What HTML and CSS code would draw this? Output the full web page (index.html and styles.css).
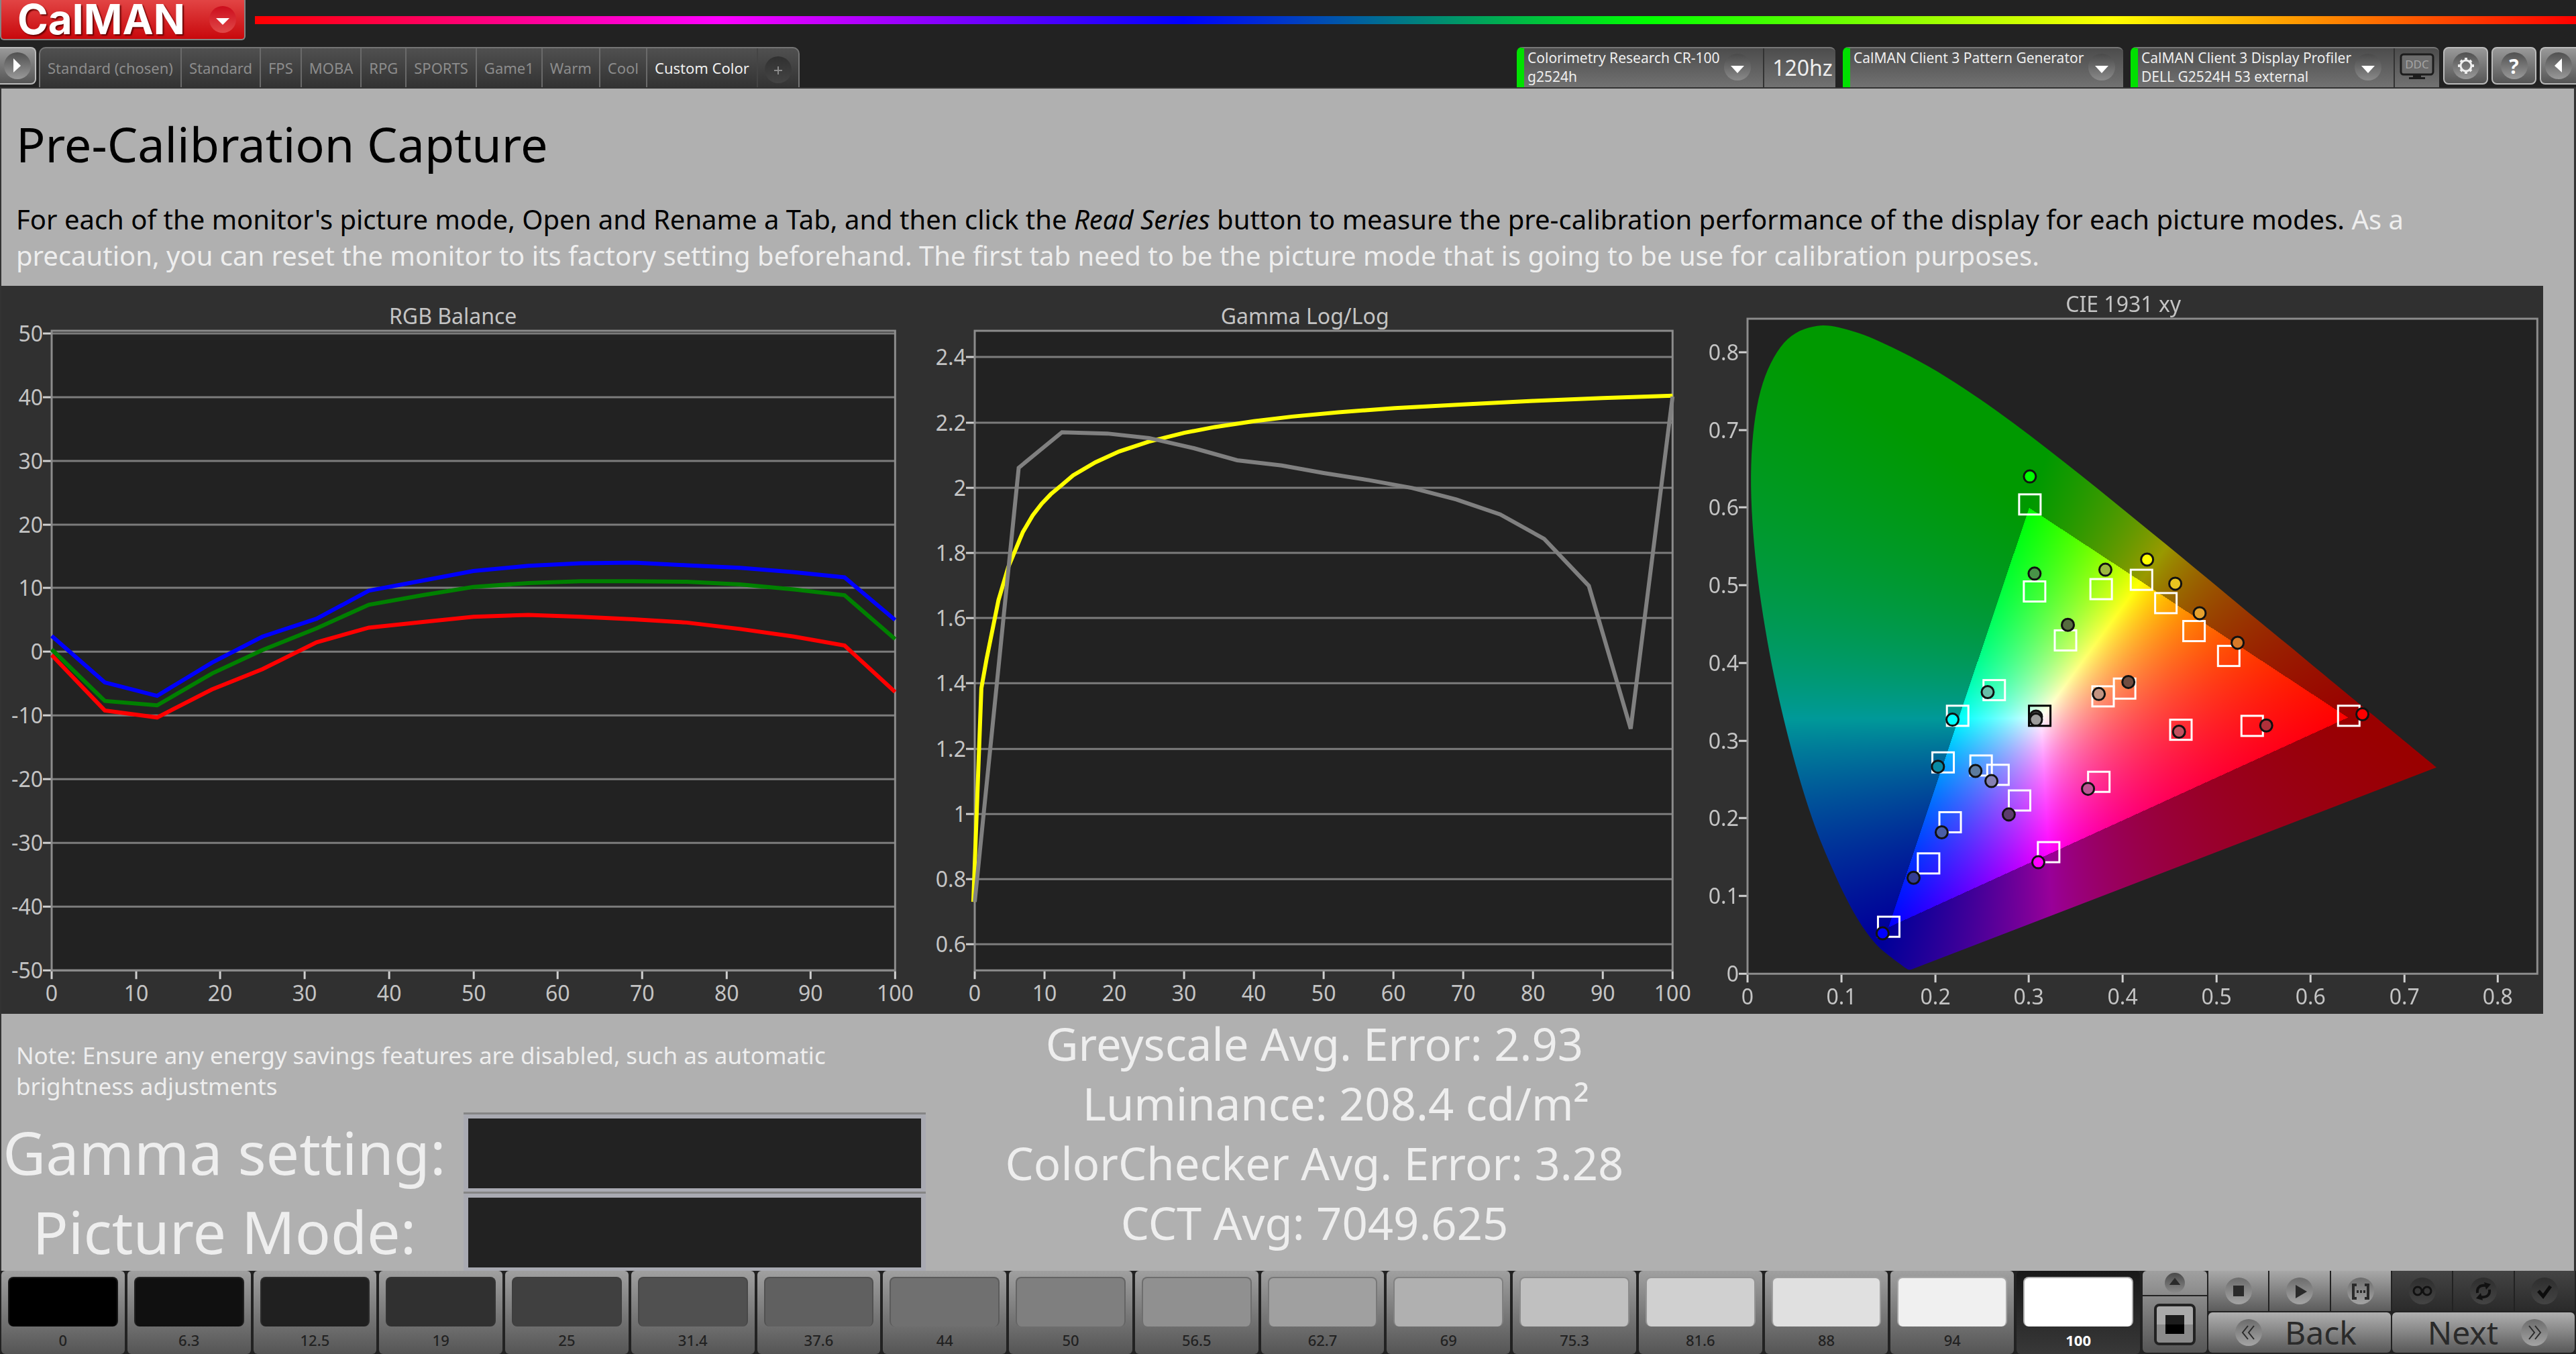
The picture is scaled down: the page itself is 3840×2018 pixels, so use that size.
FILE: index.html
```html
<!DOCTYPE html>
<html lang="en">
<head>
  <meta charset="UTF-8" />
  <meta name="viewport" content="width=device-width, initial-scale=1.0" />
  <title>CalMAN - Pre-Calibration Capture</title>
  <link rel="stylesheet" href="styles.css">
</head>
<body>
  <header class="topbar">
    <button class="logo" type="button">
      CalMAN
      <span class="knob knob-red"><svg viewBox="0 0 40 40"><path d="M10 18h20l-10 10z" fill="#fff"/></svg></span>
    </button>
    <div class="rainbow"></div>
  </header>

  <div class="toolbar">
    <button class="tool tool-left" type="button" aria-label="Show workflow">
      <span class="knob"><svg viewBox="0 0 40 40"><path d="M14 9v21l11-10z" fill="#fff"/></svg></span>
    </button>
    <nav class="tabs">
      <button class="tab" type="button">Standard (chosen)</button>
      <button class="tab" type="button">Standard</button>
      <button class="tab" type="button">FPS</button>
      <button class="tab" type="button">MOBA</button>
      <button class="tab" type="button">RPG</button>
      <button class="tab" type="button">SPORTS</button>
      <button class="tab" type="button">Game1</button>
      <button class="tab" type="button">Warm</button>
      <button class="tab" type="button">Cool</button>
      <button class="tab active" type="button">Custom Color</button>
      <button class="tab tab-add" type="button" aria-label="Add tab">
        <span class="knob knob-dark"><svg viewBox="0 0 40 40"><path d="M14 21h12M20 15v12" stroke="#8a8a8a" stroke-width="2"/></svg></span>
      </button>
    </nav>

    <div class="devices">
      <div class="device device-meter">
        <button class="device-main" type="button">
          <span class="device-name">Colorimetry Research CR-100<br>g2524h</span>
          <span class="knob"><svg viewBox="0 0 40 40"><path d="M10 18h20l-10 11z" fill="#fff"/></svg></span>
        </button>
        <span class="device-rate">120hz</span>
      </div>
      <div class="device device-source">
        <button class="device-main" type="button">
          <span class="device-name">CalMAN Client 3 Pattern Generator</span>
          <span class="knob"><svg viewBox="0 0 40 40"><path d="M10 18h20l-10 11z" fill="#fff"/></svg></span>
        </button>
      </div>
      <div class="device device-display">
        <button class="device-main" type="button">
          <span class="device-name">CalMAN Client 3 Display Profiler<br>DELL G2524H 53 external</span>
          <span class="knob"><svg viewBox="0 0 40 40"><path d="M10 18h20l-10 11z" fill="#fff"/></svg></span>
        </button>
        <button class="device-ddc" type="button" aria-label="DDC">
          <svg viewBox="0 0 52 42">
            <rect x="2" y="3" width="48" height="30" rx="4" fill="#6c6c6c" stroke="#1c1c1c" stroke-width="3"/>
            <path d="M20 34h12v3h6v3H14v-3h6z" fill="#1c1c1c"/>
            <text x="26" y="24" text-anchor="middle" font-size="17" fill="#a4a4a4">DDC</text>
          </svg>
        </button>
      </div>
      <button class="tool" type="button" aria-label="Settings">
        <span class="knob">
          <svg viewBox="0 0 40 40">
            <circle cx="20" cy="20" r="8" fill="none" stroke="#eee" stroke-width="3"/>
            <path d="M20 8v4M20 28v4M8 20h4M28 20h4M12 12l3 3M25 25l3 3M28 12l-3 3M15 25l-3 3" stroke="#eee" stroke-width="4"/>
          </svg>
        </span>
      </button>
      <button class="tool" type="button" aria-label="Help"><span class="knob knob-text">?</span></button>
      <button class="tool tool-right" type="button" aria-label="Hide panel">
        <span class="knob"><svg viewBox="0 0 40 40"><path d="M25 9v21L14 20z" fill="#fff"/></svg></span>
      </button>
    </div>
  </div>

  <main class="page">
    <h1 class="title">Pre-Calibration Capture</h1>
    <p class="intro">For each of the monitor's picture mode, Open and Rename a Tab, and then click the <em>Read Series</em> button to measure the pre-calibration performance of the display for each picture modes. <span class="light">As a<br>precaution, you can reset the monitor to its factory setting beforehand. The first tab need to be the picture mode that is going to be use for calibration purposes.</span></p>

    <section class="charts">
      <svg class="chart" id="rgbChart" viewBox="0 0 1378 1085"></svg>
      <svg class="chart" id="gammaChart" viewBox="0 0 1160 1085"></svg>
      <div class="cie">
        <canvas class="cie-fill" id="cieFill" width="1250" height="1085"></canvas>
        <svg class="chart cie-marks" id="cieChart" viewBox="0 0 1250 1085"></svg>
      </div>
    </section>

    <section class="lower">
      <div class="left">
        <p class="note">Note: Ensure any energy savings features are disabled, such as automatic<br>brightness adjustments</p>
        <div class="fields">
          <label class="field-label" for="gammaSetting">Gamma setting:</label>
          <div class="field-box"><input class="field" id="gammaSetting" type="text" /></div>
          <label class="field-label" for="pictureMode">Picture Mode:</label>
          <div class="field-box"><input class="field" id="pictureMode" type="text" /></div>
        </div>
      </div>
      <div class="stats">
        <div class="stat">Greyscale Avg. Error: 2.93</div>
        <div class="stat stat-lum">Luminance: 208.4 cd/m²</div>
        <div class="stat">ColorChecker Avg. Error: 3.28</div>
        <div class="stat">CCT Avg: 7049.625</div>
      </div>
    </section>
  </main>

  <footer class="footer">
    <div class="swatches" id="swatches"></div>
    <div class="pattern">
      <button class="pattern-up" type="button" aria-label="Expand">
        <span class="knob knob-small"><svg viewBox="0 0 40 40"><path d="M9 24h22L20 10z" fill="#2a2a2a"/></svg></span>
      </button>
      <button class="pattern-window" type="button" aria-label="Pattern window">
        <span class="pattern-frame"><span class="pattern-square"></span></span>
      </button>
    </div>
    <div class="transport">
      <button class="step" type="button" aria-label="Stop"><span class="knob"><svg viewBox="0 0 40 40"><path d="M12 12h16v16H12z" fill="#2a2a2a"/></svg></span></button>
      <button class="step" type="button" aria-label="Read"><span class="knob"><svg viewBox="0 0 40 40"><path d="M14 11v20l17-10z" fill="#2a2a2a"/></svg></span></button>
      <button class="step" type="button" aria-label="Read series"><span class="knob"><svg viewBox="0 0 40 40"><path d="M14 11H9v20h5M26 11h5v20h-5" fill="none" stroke="#2a2a2a" stroke-width="4"/><path d="M14 19h3v4h-3zM19 19h3v4h-3zM24 19h3v4h-3z" fill="#2a2a2a"/></svg></span></button>
      <button class="step step-off" type="button" aria-label="Continuous"><span class="knob knob-dark"><svg viewBox="0 0 40 40"><circle cx="13" cy="20" r="6" fill="none" stroke="#111" stroke-width="3"/><circle cx="27" cy="20" r="6" fill="none" stroke="#111" stroke-width="3"/></svg></span></button>
      <button class="step step-off" type="button" aria-label="Repeat"><span class="knob knob-dark"><svg viewBox="0 0 40 40"><path d="M11 23c-1-8 4-12 12-11M29 18c1 8-4 12-12 11" fill="none" stroke="#111" stroke-width="4"/><path d="M21 7l10 3-7 8zM19 34L9 31l7-8z" fill="#111"/></svg></span></button>
      <button class="step step-off" type="button" aria-label="Accept"><span class="knob knob-dark"><svg viewBox="0 0 40 40"><path d="M11 20l7 8L29 13" fill="none" stroke="#0c0c0c" stroke-width="5"/></svg></span></button>
      <button class="move move-back" type="button"><span class="knob"><svg viewBox="0 0 40 40"><path d="M19 10l-8 10 8 10M28 10l-8 10 8 10" fill="none" stroke="#2a2a2a" stroke-width="2"/></svg></span>Back</button>
      <button class="move move-next" type="button">Next<span class="knob"><svg viewBox="0 0 40 40"><path d="M12 10l8 10-8 10M21 10l8 10-8 10" fill="none" stroke="#2a2a2a" stroke-width="2"/></svg></span></button>
    </div>
  </footer>

  <script src="charts.js"></script>
</body>
</html>
```
FILE: styles.css
```css
* {
  box-sizing: border-box;
}

body {
  margin: 0;
  min-height: 100vh;
  display: flex;
  flex-direction: column;
  background: #222;
  color: #eee;
  font-family: "Noto Sans", "Open Sans", sans-serif;
}

button {
  margin: 0;
  padding: 0;
  border: none;
  background: none;
  color: inherit;
  font-family: inherit;
  cursor: pointer;
}

/* round gradient backing shared by the icons */
.knob {
  flex: none;
  display: flex;
  align-items: center;
  justify-content: center;
  width: 40px;
  height: 40px;
  border-radius: 50%;
  background: linear-gradient(#4a4a4a, #8a8a8a);
}

.knob svg {
  width: 100%;
  height: 100%;
}

.knob-red {
  background: linear-gradient(#cc0c1c, #e04848);
}

.knob-dark {
  background: linear-gradient(#303030, #444);
}

.knob-small {
  width: 30px;
  height: 30px;
}

.knob-text {
  font-size: 30px;
  font-weight: bold;
  color: #fff;
}

/* header */
.topbar {
  display: flex;
  height: 66px;
}

.logo {
  display: flex;
  align-items: center;
  justify-content: space-between;
  width: 366px;
  height: 60px;
  padding: 0 12px 0 24px;
  border: 2px solid #858585;
  border-top: none;
  border-radius: 0 0 6px 6px;
  background: linear-gradient(#e24444, #c8080c);
  color: #fff;
  font-family: Inter, sans-serif;
  font-size: 62px;
  font-weight: bold;
  line-height: 56px;
  text-shadow: 2px 2px 2px #600;
}

.rainbow {
  flex: 1;
  height: 12px;
  margin: 24px 0 0 14px;
  background: linear-gradient(to right, #f00, #f0f, #00f, #0f0, #ff0, #f00);
}

.toolbar {
  display: flex;
  align-items: flex-start;
  height: 64px;
  padding-top: 4px;
}

.tool {
  display: flex;
  align-items: center;
  justify-content: center;
  width: 67px;
  height: 56px;
  border: 2px solid #bbb;
  border-radius: 8px;
  background: linear-gradient(#999, #555);
}

.tool .knob {
  background: linear-gradient(#505050, #999);
}

.tool-left {
  width: 54px;
  border-left: none;
  border-radius: 0 8px 8px 0;
}

.tool-right {
  width: 54px;
  border-right: none;
  border-radius: 8px 0 0 8px;
}

.tabs {
  display: flex;
  height: 60px;
  margin-left: 4px;
  border: 2px solid #757575;
  border-bottom: none;
  border-radius: 10px 10px 0 0;
  background: linear-gradient(#505050, #333);
}

.tab {
  padding: 0 11px;
  border-right: 2px solid #6a6a6a;
  color: #8c8c8c;
  font-size: 22px;
}

.tab.active {
  border-right-color: #444;
  color: #eee;
}

.tab-add {
  padding: 6px 10px 0;
  border-right: none;
}

.devices {
  display: flex;
  gap: 5px;
  margin-left: auto;
}

.device {
  display: flex;
  height: 60px;
  margin-right: 6px;
  border-top: 2px solid #777;
  border-left: 11px solid #00e000;
  border-radius: 8px 8px 0 0;
  background: linear-gradient(#4c4c4c, #727272);
}

.device-meter {
  width: 475px;
}

.device-source {
  width: 418px;
}

.device-display {
  width: 460px;
  margin-right: 1px;
}

.device-main {
  flex: 1;
  display: flex;
  justify-content: space-between;
  align-items: flex-start;
  padding: 0 18px 0 5px;
  text-align: left;
}

.device-source .device-main {
  padding-right: 12px;
}

.device-name {
  font-size: 21px;
  line-height: 28px;
  white-space: nowrap;
}

.device-main .knob {
  margin-top: 8px;
}

.device-rate {
  width: 108px;
  padding-left: 8px;
  border-left: 2px solid #333;
  font-size: 32px;
  line-height: 58px;
  text-align: center;
}

.device-ddc {
  width: 68px;
  border-left: 2px solid #333;
}

.device-ddc svg {
  width: 52px;
}

/* page */
.page {
  flex: 1;
  padding-top: 42px;
  border: solid #333;
  border-width: 2px 3px 0 2px;
  background: #b0b0b0;
}

.title {
  margin: 0 22px 46px;
  color: #000;
  font-size: 72px;
  font-weight: normal;
  line-height: 80px;
}

.intro {
  margin: 0 22px 18px;
  color: #000;
  font-size: 40px;
  line-height: 54px;
}

.light {
  color: #eee;
}

.charts {
  display: grid;
  grid-template-columns: 1378fr 1160fr 1250fr;
  margin-right: 46px;
  background: #303030;
}

.chart {
  display: block;
  width: 100%;
  font-size: 32px;
  fill: #c4c4c4;
}

.plot {
  fill: #222;
}

.frame {
  fill: none;
  stroke: #8c8c8c;
  stroke-width: 3;
}

.grid {
  stroke: #7c7c7c;
  stroke-width: 3;
}

.tick {
  stroke: #d0d0d0;
  stroke-width: 3;
}

.series {
  fill: none;
  stroke-width: 6;
}

.target {
  fill: none;
  stroke-width: 3;
}

.reading {
  stroke: #111;
  stroke-width: 3;
}

.cie {
  position: relative;
}

.cie-fill {
  display: block;
  width: 100%;
}

.cie-marks {
  position: absolute;
  top: 0;
  left: 0;
}

.lower {
  display: grid;
  grid-template-columns: 1378fr 1160fr 1298fr;
}

.note {
  margin: 39px 22px 16px;
  font-size: 35px;
  line-height: 46px;
}

.fields {
  display: grid;
  grid-template-columns: 1fr 1fr;
}

.field-label {
  padding-right: 24px;
  font-size: 88px;
  line-height: 118px;
  text-align: center;
  white-space: nowrap;
}

.field-box {
  height: 118px;
  padding: 6px 7px;
  border-top: 3px solid #858585;
  background: #a9aab2;
}

.field {
  display: block;
  width: 100%;
  height: 104px;
  padding: 0 16px;
  border: none;
  background: #222;
  color: #eee;
  font-family: inherit;
  font-size: 64px;
}

.stats {
  text-align: center;
}

.stat {
  font-size: 67px;
  line-height: 89px;
}

.stat-lum {
  padding-left: 64px;
}

/* footer */
.footer {
  display: flex;
  height: 124px;
  background: #222;
}

.swatches {
  flex: 1;
  display: flex;
}

.swatch {
  flex: 1;
  display: flex;
  flex-direction: column;
  margin: 0 2px;
  padding: 9px 10px 0;
  border-radius: 6px;
  background: linear-gradient(#a0a0a0, #555);
  color: #222;
}

.swatch-color {
  height: 74px;
  border: 2px solid rgba(60, 60, 60, 0.4);
  border-bottom: none;
  border-radius: 8px;
}

.swatch-label {
  font-size: 22px;
  font-weight: 500;
  line-height: 40px;
  text-align: center;
}

.swatch.active {
  background: linear-gradient(#181818, #383838);
  color: #fff;
}

.swatch.active .swatch-label {
  font-weight: bold;
}

.pattern {
  display: flex;
  flex-direction: column;
  gap: 2px;
  width: 98px;
  padding: 0 0 2px 2px;
}

.pattern-up {
  display: flex;
  align-items: center;
  justify-content: center;
  height: 36px;
  border-radius: 6px 6px 0 0;
  background: linear-gradient(#a0a0a0, #8a8a8a);
}

.pattern-window {
  flex: 1;
  display: flex;
  align-items: center;
  justify-content: center;
  border-radius: 0 0 6px 6px;
  background: linear-gradient(#8a8a8a, #555);
}

.pattern-frame {
  display: flex;
  align-items: center;
  justify-content: center;
  width: 62px;
  height: 62px;
  border: 4px solid #222;
  border-radius: 8px;
  background: linear-gradient(#aaa 50%, #8a8a8a 50%);
}

.pattern-square {
  width: 28px;
  height: 28px;
  background: linear-gradient(#1c1c1c 50%, #000 50%);
}

.transport {
  display: grid;
  grid-template-columns: repeat(6, 1fr);
  grid-template-rows: 60px 60px;
  gap: 2px;
  width: 550px;
  padding: 0 2px;
}

.step {
  display: flex;
  align-items: center;
  justify-content: center;
  background: linear-gradient(#a8a8a8, #5c5c5c);
}

.step .knob,
.move .knob {
  background: linear-gradient(#6c6c6c, #a4a4a4);
}

.step-off {
  background: linear-gradient(#444, #2a2a2a);
}

.step-off .knob {
  background: linear-gradient(#2e2e2e, #444);
}

.move {
  grid-column: span 3;
  display: flex;
  align-items: center;
  gap: 34px;
  padding: 0 40px;
  border-radius: 6px;
  background: linear-gradient(#b0b0b0, #585858);
  color: #2a2a2a;
  font-size: 48px;
  line-height: 58px;
}

.move-next {
  justify-content: flex-end;
}
```
FILE: charts.js
```js
const levels = [0, 6.3, 12.5, 19, 25, 31.4, 37.6, 44, 50, 56.5, 62.7, 69, 75.3, 81.6, 88, 94, 100];

const rgb = {
  '#f00': [-0.5, -9.2, -10.3, -5.9, -2.7, 1.5, 3.8, 4.7, 5.5, 5.8, 5.5, 5.1, 4.6, 3.6, 2.4, 1, -6.3],
  '#008000': [0.4, -7.7, -8.4, -3.4, 0.3, 3.7, 7.4, 8.9, 10.2, 10.8, 11.1, 11.1, 11, 10.6, 9.8, 8.9, 2],
  '#00f': [2.5, -4.8, -6.9, -1.7, 2.4, 5.2, 9.6, 11.2, 12.7, 13.5, 13.9, 14, 13.6, 13.2, 12.5, 11.7, 5]
};

const gamma = [0.73, 2.061, 2.17, 2.166, 2.152, 2.121, 2.084, 2.068, 2.045, 2.023, 1.999, 1.964, 1.918, 1.843, 1.699, 1.261, 2.279];

const gammaTarget = [
  [-0.2, 0.73], [0.95, 1.385], [1.7, 1.475], [3.4, 1.655], [4.8, 1.756], [6.9, 1.864], [8.3, 1.915],
  [9.6, 1.951], [10.9, 1.98], [12.4, 2.007], [14.1, 2.038], [17.3, 2.078], [20.7, 2.111], [24.9, 2.141],
  [30, 2.168], [34.4, 2.186], [40, 2.204], [45.5, 2.218], [52.1, 2.231], [60.2, 2.244], [70.5, 2.256],
  [80, 2.266], [90, 2.275], [100, 2.282]
];

const locus = [
  [0.1741, 0.005], [0.1714, 0.0051], [0.1689, 0.0069], [0.1644, 0.0109], [0.1566, 0.0177], [0.144, 0.0297],
  [0.1355, 0.0399], [0.1241, 0.0578], [0.1096, 0.0868], [0.0913, 0.1327], [0.0687, 0.2007], [0.0454, 0.295],
  [0.0235, 0.4127], [0.0082, 0.5384], [0.0039, 0.6548], [0.0139, 0.7502], [0.0389, 0.812], [0.0743, 0.8338],
  [0.1142, 0.8262], [0.1547, 0.8059], [0.1929, 0.7816], [0.2296, 0.7543], [0.2658, 0.7243], [0.3016, 0.6923],
  [0.3373, 0.6589], [0.3731, 0.6245], [0.4087, 0.5896], [0.4441, 0.5547], [0.4788, 0.5202], [0.5125, 0.4866],
  [0.5448, 0.4544], [0.5752, 0.4242], [0.6029, 0.3965], [0.627, 0.3725], [0.6482, 0.3514], [0.6658, 0.334],
  [0.6915, 0.3083], [0.7079, 0.292], [0.719, 0.2809], [0.726, 0.274], [0.7347, 0.2653]
];

const targets = [
  [0.301, 0.604], [0.306, 0.492], [0.377, 0.495], [0.42, 0.507], [0.446, 0.477], [0.476, 0.441],
  [0.513, 0.409], [0.339, 0.429], [0.263, 0.365], [0.224, 0.332], [0.402, 0.367], [0.379, 0.357],
  [0.462, 0.314], [0.2085, 0.272], [0.249, 0.268], [0.267, 0.256], [0.3745, 0.247], [0.29, 0.223],
  [0.216, 0.195], [0.193, 0.142], [0.321, 0.1565], [0.1505, 0.0605], [0.538, 0.319], [0.641, 0.332],
  [0.3115, 0.332, '#000']
];

const readings = [
  [0.301, 0.64, '#0f0'], [0.306, 0.515, '#489348'], [0.3815, 0.52, '#9cb840'], [0.426, 0.533, '#ff0'],
  [0.456, 0.502, '#e8c520'], [0.482, 0.464, '#e6a22e'], [0.5225, 0.426, '#d87a28'], [0.3415, 0.449, '#566b3f'],
  [0.256, 0.3625, '#68bfa9'], [0.406, 0.3755, '#724d40'], [0.3745, 0.36, '#c39482'], [0.2185, 0.327, '#0ff'],
  [0.3075, 0.331, '#444'], [0.3075, 0.327, '#9c9c9c'], [0.46, 0.3115, '#c25160'], [0.203, 0.2665, '#0889a3'],
  [0.243, 0.261, '#5c7b9e'], [0.26, 0.248, '#8580b2'], [0.363, 0.238, '#bb5593'], [0.2785, 0.205, '#5c3c6c'],
  [0.207, 0.182, '#4a5ea6'], [0.177, 0.1235, '#333d93'], [0.31, 0.1435, '#f0f'], [0.144, 0.052, '#00f'],
  [0.553, 0.3195, '#b0303a'], [0.6555, 0.334, '#f00']
];

// a chart: plot box, data ranges, tick values
function axes(c) {
  const sx = v => c.left + (v - c.xMin) / (c.xMax - c.xMin) * (c.right - c.left);
  const sy = v => c.bottom - (v - c.yMin) / (c.yMax - c.yMin) * (c.bottom - c.top);
  return { sx, sy };
}

function frame(c, sx, sy) {
  let out = '';
  if (c.fill) out += `<rect class="plot" x="${c.left}" y="${c.top}" width="${c.right - c.left}" height="${c.bottom - c.top}"/>`;
  c.yTicks.forEach(v => {
    const y = Math.round(sy(v));
    if (c.grid) out += `<path class="grid" d="M${c.left} ${y}H${c.right}"/>`;
    out += `<path class="tick" d="M${c.left - 13} ${y}H${c.left - 1}"/>`;
    out += `<text x="${c.left - 13}" y="${y + 12}" text-anchor="end">${v}</text>`;
  });
  c.xTicks.forEach(v => {
    const x = Math.round(sx(v));
    out += `<path class="tick" d="M${x} ${c.bottom + 1}V${c.bottom + 13}"/>`;
    out += `<text x="${x}" y="${c.bottom + 46}" text-anchor="middle">${v}</text>`;
  });
  out += `<rect class="frame" x="${c.left}" y="${c.top}" width="${c.right - c.left}" height="${c.bottom - c.top}"/>`;
  out += `<text x="${c.titleX}" y="${c.top - 10}" text-anchor="middle">${c.title}</text>`;
  return out;
}

function line(points, color, sx, sy) {
  return `<polyline class="series" stroke="${color}" points="${points.map(p => sx(p[0]) + ',' + sy(p[1])).join(' ')}"/>`;
}

const tens = [0, 10, 20, 30, 40, 50, 60, 70, 80, 90, 100];

function drawRgb() {
  const c = {
    left: 75, right: 1332, top: 67, bottom: 1020, xMin: 0, xMax: 100, yMin: -50, yMax: 50.4,
    xTicks: tens, yTicks: [50, 40, 30, 20, 10, 0, -10, -20, -30, -40, -50],
    grid: true, fill: true, title: 'RGB Balance', titleX: 673
  };
  const { sx, sy } = axes(c);
  let out = frame(c, sx, sy);
  Object.keys(rgb).forEach(color => {
    out += line(levels.map((l, i) => [l, rgb[color][i]]), color, sx, sy);
  });
  document.getElementById('rgbChart').innerHTML = out;
}

function drawGamma() {
  const c = {
    left: 73, right: 1113, top: 67, bottom: 1020, xMin: 0, xMax: 100, yMin: 0.52, yMax: 2.481,
    xTicks: tens, yTicks: [2.4, 2.2, 2, 1.8, 1.6, 1.4, 1.2, 1, 0.8, 0.6],
    grid: true, fill: true, title: 'Gamma Log/Log', titleX: 565
  };
  const { sx, sy } = axes(c);
  document.getElementById('gammaChart').innerHTML = frame(c, sx, sy) +
    line(gammaTarget, '#ff0', sx, sy) +
    line(levels.map((l, i) => [l, gamma[i]]), '#808080', sx, sy);
}

function inGamut(x, y) {
  const t = [[0.64, 0.33], [0.3, 0.6], [0.15, 0.06]];
  for (let i = 0; i < 3; i++) {
    const a = t[i], b = t[(i + 1) % 3];
    if ((b[0] - a[0]) * (y - a[1]) - (b[1] - a[1]) * (x - a[0]) < 0) return false;
  }
  return true;
}

function drawCie() {
  const c = {
    left: 64, right: 1241, top: 49, bottom: 1025, xMin: 0, xMax: 0.842, yMin: 0, yMax: 0.843,
    xTicks: [0, 0.1, 0.2, 0.3, 0.4, 0.5, 0.6, 0.7, 0.8], yTicks: [0.8, 0.7, 0.6, 0.5, 0.4, 0.3, 0.2, 0.1, 0],
    title: 'CIE 1931 xy', titleX: 624
  };
  const { sx, sy } = axes(c);
  const canvas = document.getElementById('cieFill');
  const ctx = canvas.getContext('2d');
  const img = ctx.createImageData(canvas.width, canvas.height);

  for (let py = c.top; py < c.bottom; py++) {
    const y = Math.max((c.bottom - py) / (c.bottom - c.top) * c.yMax, 0.001);
    for (let px = c.left; px < c.right; px++) {
      const x = (px - c.left) / (c.right - c.left) * c.xMax;
      const X = x / y, Z = (1 - x - y) / y;
      const r = Math.max(0, 3.2406 * X - 1.5372 - 0.4986 * Z);
      const g = Math.max(0, -0.9689 * X + 1.8758 + 0.0415 * Z);
      const b = Math.max(0, 0.0557 * X - 0.204 + 1.057 * Z);
      const k = (inGamut(x, y) ? 255 : 153) / Math.max(r, g, b);
      const i = (py * canvas.width + px) * 4;
      img.data[i] = r * k;
      img.data[i + 1] = g * k;
      img.data[i + 2] = b * k;
      img.data[i + 3] = 255;
    }
  }
  ctx.putImageData(img, 0, 0);

  // keep only what is inside the spectral locus
  ctx.globalCompositeOperation = 'destination-in';
  ctx.beginPath();
  const p = locus.map(q => [sx(q[0]), sy(q[1])]);
  ctx.moveTo(p[0][0], p[0][1]);
  for (let i = 0; i < p.length - 1; i++) {
    const a = p[i - 1] || p[i], d = p[i + 2] || p[i + 1];
    ctx.bezierCurveTo(
      p[i][0] + (p[i + 1][0] - a[0]) / 6, p[i][1] + (p[i + 1][1] - a[1]) / 6,
      p[i + 1][0] - (d[0] - p[i][0]) / 6, p[i + 1][1] - (d[1] - p[i][1]) / 6,
      p[i + 1][0], p[i + 1][1]);
  }
  ctx.closePath();
  ctx.fill();
  ctx.globalCompositeOperation = 'destination-over';
  ctx.fillStyle = '#222';
  ctx.fillRect(c.left, c.top, c.right - c.left, c.bottom - c.top);

  let out = frame(c, sx, sy);
  targets.forEach(t => {
    out += `<rect class="target" x="${sx(t[0]) - 16}" y="${sy(t[1]) - 15}" width="32" height="30" stroke="${t[2] || '#fff'}"/>`;
  });
  readings.forEach(t => {
    out += `<circle class="reading" cx="${sx(t[0])}" cy="${sy(t[1])}" r="9" fill="${t[2]}"/>`;
  });
  document.getElementById('cieChart').innerHTML = out;
}

function drawSwatches() {
  document.getElementById('swatches').innerHTML = levels.map(l => {
    const v = Math.round(l * 2.55);
    return `<button type="button" class="swatch${l === 100 ? ' active' : ''}">
      <span class="swatch-color" style="background: rgb(${v}, ${v}, ${v})"></span>
      <span class="swatch-label">${l}</span>
    </button>`;
  }).join('');
}

drawRgb();
drawGamma();
drawCie();
drawSwatches();
```
